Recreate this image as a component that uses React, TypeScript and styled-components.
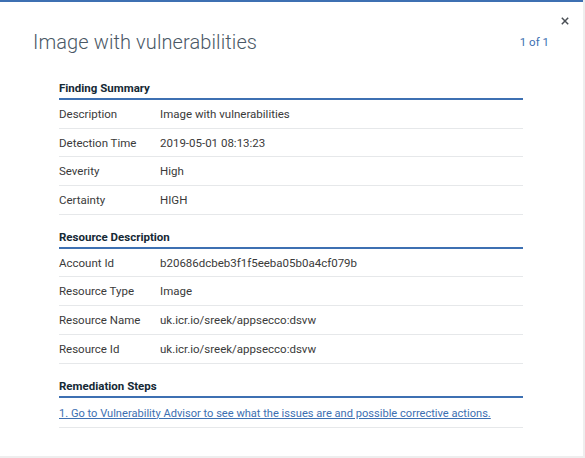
import React from 'react';
import styled, { createGlobalStyle } from 'styled-components';

const GlobalStyle = createGlobalStyle`
  html, body {
    margin: 0;
    padding: 0;
    background: #eeeeee;
  }
  body {
    font-family: Roboto, "Liberation Sans", Arial, sans-serif;
    color: #152935;
  }
`;

const Modal = styled.div`
  position: relative;
  box-sizing: border-box;
  width: 583px;
  height: 456px;
  background: #ffffff;
  border-top: 2px solid #3d70b2;
  overflow: hidden;
`;

const CloseButton = styled.button`
  position: absolute;
  top: 10px;
  right: 9px;
  width: 18px;
  height: 18px;
  padding: 0;
  border: none;
  background: none;
  display: flex;
  align-items: center;
  justify-content: center;
  cursor: pointer;
`;

const Header = styled.div`
  display: flex;
  align-items: center;
  justify-content: space-between;
  padding: 26px 34px 0 33px;
  height: 28px;
`;

const Title = styled.h1`
  margin: 0;
  font-size: 20px;
  font-weight: 300;
  color: #4a5866;
  letter-spacing: 0.1px;
`;

const Pager = styled.span`
  font-size: 11.5px;
  color: #3d70b2;
`;

const Body = styled.div`
  padding: 0 60px 0 59px;
`;

const Section = styled.section<{ $first?: boolean }>`
  margin-top: ${p => (p.$first ? '23px' : '13px')};
`;

const SectionTitle = styled.h2`
  margin: 0;
  font-size: 11.5px;
  font-weight: 700;
  line-height: 18px;
  padding-bottom: 1px;
  color: #152935;
  border-bottom: 2px solid #3d70b2;
`;

const Row = styled.div`
  display: grid;
  grid-template-columns: 101px 1fr;
  align-items: center;
  box-sizing: border-box;
  height: 28.7px;
  border-bottom: 1px solid #e6e8ea;
  font-size: 11.5px;
  color: #3a3a3a;
`;

const Label = styled.span``;

const Value = styled.span``;

const StepRow = styled.div`
  display: flex;
  align-items: center;
  box-sizing: border-box;
  height: 30px;
  padding-top: 2px;
  border-bottom: 1px solid #e6e8ea;
`;

const StepLink = styled.a`
  font-size: 11.1px;
  color: #3d70b2;
  text-decoration: underline;
`;

const summary = [
  ['Description', 'Image with vulnerabilities'],
  ['Detection Time', '2019-05-01 08:13:23'],
  ['Severity', 'High'],
  ['Certainty', 'HIGH'],
];

const resource = [
  ['Account Id', 'b20686dcbeb3f1f5eeba05b0a4cf079b'],
  ['Resource Type', 'Image'],
  ['Resource Name', 'uk.icr.io/sreek/appsecco:dsvw'],
  ['Resource Id', 'uk.icr.io/sreek/appsecco:dsvw'],
];

const App: React.FC = () => {
  return (
    <>
      <GlobalStyle />
      <Modal>
        <CloseButton aria-label="Close">
          <svg width="8" height="8" viewBox="0 0 8 8">
            <path d="M0.8 0.8 L7.2 7.2 M7.2 0.8 L0.8 7.2" stroke="#4a4f55" strokeWidth="1.5" />
          </svg>
        </CloseButton>
        <Header>
          <Title>Image with vulnerabilities</Title>
          <Pager>1 of 1</Pager>
        </Header>
        <Body>
          <Section $first>
            <SectionTitle>Finding Summary</SectionTitle>
            {summary.map(([k, v]) => (
              <Row key={k}>
                <Label>{k}</Label>
                <Value>{v}</Value>
              </Row>
            ))}
          </Section>
          <Section>
            <SectionTitle>Resource Description</SectionTitle>
            {resource.map(([k, v]) => (
              <Row key={k}>
                <Label>{k}</Label>
                <Value>{v}</Value>
              </Row>
            ))}
          </Section>
          <Section>
            <SectionTitle>Remediation Steps</SectionTitle>
            <StepRow>
              <StepLink href="#">
                1. Go to Vulnerability Advisor to see what the issues are and possible corrective actions.
              </StepLink>
            </StepRow>
          </Section>
        </Body>
      </Modal>
    </>
  );
};

export default App;
